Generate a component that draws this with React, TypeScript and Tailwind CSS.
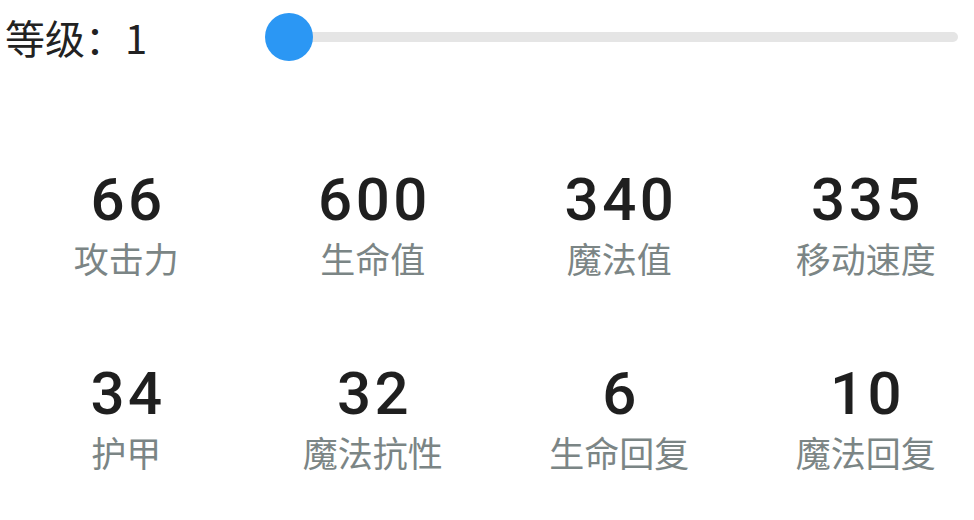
import React from "react";

const stats = [
  { value: "66", label: "攻击力" },
  { value: "600", label: "生命值" },
  { value: "340", label: "魔法值" },
  { value: "335", label: "移动速度" },
  { value: "34", label: "护甲" },
  { value: "32", label: "魔法抗性" },
  { value: "6", label: "生命回复" },
  { value: "10", label: "魔法回复" },
];

const cjk = "'Noto Sans CJK SC', 'Noto Sans', sans-serif";

export default function App() {
  return (
    <div className="w-[974px] h-[520px] overflow-hidden bg-white">
      {/* level slider */}
      <div className="flex items-center h-[72px] pt-[1px]">
        <div
          className="w-[265px] pl-[5px] text-[40px] leading-none text-[#222222]"
          style={{ fontFamily: cjk }}
        >
          等级：1
        </div>
        <div className="relative flex-1 mr-[16px] h-[48px] flex items-center">
          <div className="ml-[24px] flex-1 h-[10px] rounded-full bg-[#e5e5e5]" />
          <div className="absolute left-0 top-0 w-[48px] h-[48px] rounded-full bg-[#2b97f4]" />
        </div>
      </div>

      {/* attribute grid */}
      <div className="grid grid-cols-[repeat(4,246.5px)] pl-[3px] mt-[98px] gap-y-[89px]">
        {stats.map((s) => (
          <div key={s.label} className="flex flex-col items-center">
            <div
              className="pl-[3.5px] tracking-[3.5px] text-[60px] leading-none font-medium text-[#1f1f1f]"
              style={{ fontFamily: "Roboto, 'Noto Sans', sans-serif" }}
            >
              {s.value}
            </div>
            <div
              className="mt-[10px] text-[35px] leading-none text-[#7b8585]"
              style={{ fontFamily: cjk }}
            >
              {s.label}
            </div>
          </div>
        ))}
      </div>
    </div>
  );
}
